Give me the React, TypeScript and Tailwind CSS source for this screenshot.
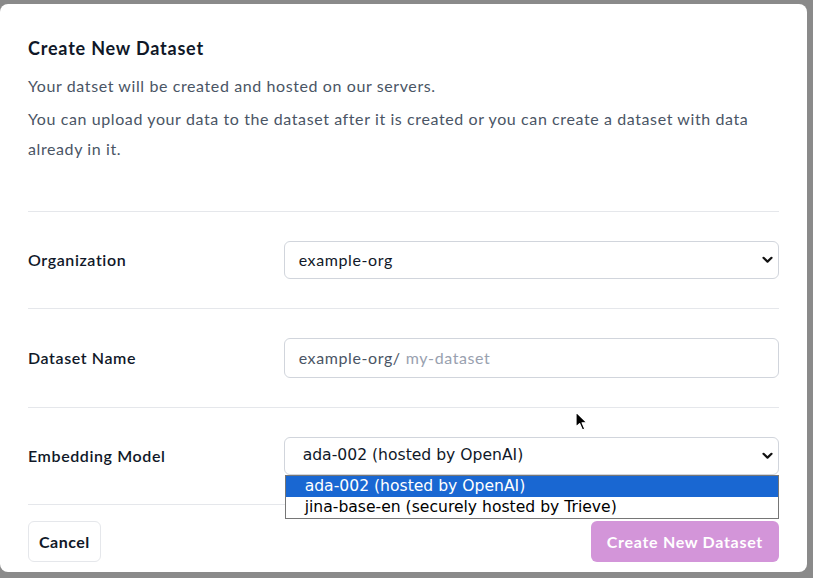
import React from 'react';

const font = { fontFamily: 'Lato, "Noto Sans", sans-serif' };
const sysFont = { fontFamily: '"DejaVu Sans", "Noto Sans", sans-serif' };

const Chevron: React.FC = () => (
  <svg className="pointer-events-none absolute right-[6px] top-1/2 -translate-y-1/2" width="11" height="8" viewBox="0 0 11 8">
    <path d="M1.5 1.8 L5.5 5.6 L9.5 1.8" fill="none" stroke="#111" strokeWidth="2.2" strokeLinecap="round" strokeLinejoin="round" />
  </svg>
);

const Row: React.FC<{ label: string; children: React.ReactNode }> = ({ label, children }) => (
  <div className="grid grid-cols-3 items-center gap-4 border-t border-gray-200 py-[29px]">
    <label className="text-[16px] font-semibold tracking-[0.6px] text-gray-900">{label}</label>
    <div className="col-span-2">{children}</div>
  </div>
);

const App: React.FC = () => {
  return (
    <div className="h-[578px] w-[813px] overflow-hidden bg-[#8a8a8a] pt-[4px]" style={font}>
      <div className="relative h-[568px] w-[807px] rounded-lg bg-white px-[28px] pt-[31px]">
        <h2 className="text-[18px] font-bold tracking-[0.8px] text-gray-900">Create New Dataset</h2>
        <p className="mt-[9px] text-[16px] leading-[30px] tracking-[0.6px] text-gray-600">
          Your datset will be created and hosted on our servers.
        </p>
        <p className="mt-[3px] text-[16px] leading-[30px] tracking-[0.6px] text-gray-600">
          You can upload your data to the dataset after it is created or you can create a dataset with data already in it.
        </p>

        <div className="mt-[47px]">
          <Row label="Organization">
            <div className="relative">
              <div className="flex h-[38px] items-center rounded-md border border-gray-300 px-[14px] text-[16px] tracking-[0.6px] text-gray-900">
                example-org
              </div>
              <Chevron />
            </div>
          </Row>
          <Row label="Dataset Name">
            <div className="flex h-[40px] items-center rounded-md border border-gray-300 px-[14px] text-[16px] tracking-[0.6px]">
              <span className="text-gray-600">example-org/</span>
              <span className="ml-[5px] text-gray-400">my-dataset</span>
            </div>
          </Row>
          <Row label="Embedding Model">
            <div className="relative">
              <div
                className="flex h-[38px] items-center rounded-md border border-gray-300 px-[18px] text-[15.6px] text-gray-900"
                style={sysFont}
              >
                ada-002 (hosted by OpenAI)
              </div>
              <Chevron />
              <div
                className="absolute left-[1px] right-0 top-[38px] z-10 border border-[#767676] bg-white text-[15.6px] leading-[21px] text-black"
                style={sysFont}
              >
                <div className="bg-[#1967d2] px-[19px] text-white">ada-002 (hosted by OpenAI)</div>
                <div className="px-[19px]">jina-base-en (securely hosted by Trieve)</div>
              </div>
            </div>
          </Row>
          <div className="flex items-center justify-between border-t border-gray-200 pt-[16px]">
            <button className="h-[41px] rounded-md border border-gray-200 px-[10px] text-[16px] font-bold tracking-[0.5px] text-gray-900">
              Cancel
            </button>
            <button className="h-[41px] rounded-md bg-[#d395d9] px-[16px] text-[16px] font-bold tracking-[0.7px] text-white">
              Create New Dataset
            </button>
          </div>
        </div>

        <svg className="absolute left-[575px] top-[407px]" width="14" height="22" viewBox="0 0 14 22">
          <path d="M1 1 L1 16 L4.6 12.6 L7.4 19 L9.8 18 L7.1 11.8 L12 11.8 Z" fill="#000" stroke="#fff" strokeWidth="1.2" strokeLinejoin="round" />
        </svg>
      </div>
    </div>
  );
};

export default App;
